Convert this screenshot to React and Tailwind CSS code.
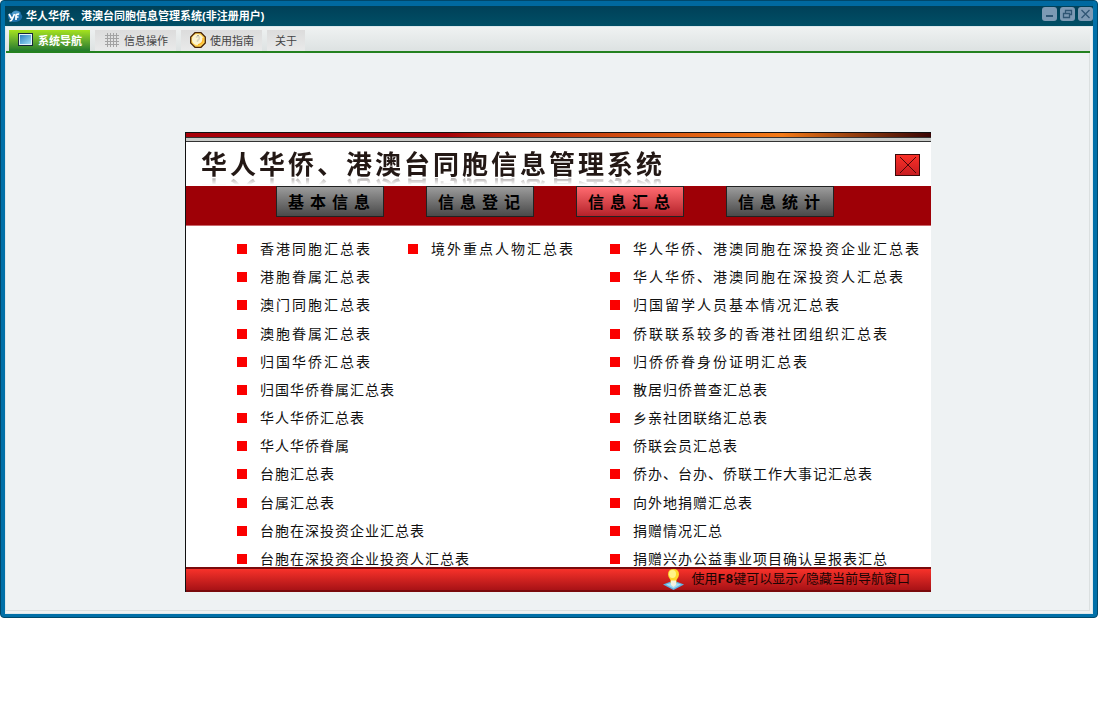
import clsx from 'clsx'

const menuItems = [
  { label: '系统导航', icon: 'screen' },
  { label: '信息操作', icon: 'grid' },
  { label: '使用指南', icon: 'guide' },
  { label: '关于' },
]

const sections = ['基本信息', '信息登记', '信息汇总', '信息统计']

const reportColumns = [
  [
    '香港同胞汇总表',
    '港胞眷属汇总表',
    '澳门同胞汇总表',
    '澳胞眷属汇总表',
    '归国华侨汇总表',
    '归国华侨眷属汇总表',
    '华人华侨汇总表',
    '华人华侨眷属',
    '台胞汇总表',
    '台属汇总表',
    '台胞在深投资企业汇总表',
    '台胞在深投资企业投资人汇总表',
  ],
  ['境外重点人物汇总表'],
  [
    '华人华侨、港澳同胞在深投资企业汇总表',
    '华人华侨、港澳同胞在深投资人汇总表',
    '归国留学人员基本情况汇总表',
    '侨联联系较多的香港社团组织汇总表',
    '归侨侨眷身份证明汇总表',
    '散居归侨普查汇总表',
    '乡亲社团联络汇总表',
    '侨联会员汇总表',
    '侨办、台办、侨联工作大事记汇总表',
    '向外地捐赠汇总表',
    '捐赠情况汇总',
    '捐赠兴办公益事业项目确认呈报表汇总',
  ],
]

function AppLogo() {
  return (
    <svg width="16" height="14" viewBox="0 0 16 14" aria-hidden="true">
      <path d="M1 8q-1-4 4-4 3-4 6-2 3 0 3 3 2 2 1 4-2 4-8 4-5 0-6-5z" fill="#1c6fa8" />
      <ellipse cx="9" cy="4.500" rx="4" ry="2.500" fill="#4f9bcb" />
      <path d="M2 5l2.500 4.500M7.500 5L5 10.500Q4.500 12 2.500 12M9 11V6.500Q9 5 12 5M8.500 8h3" fill="none" stroke="#fff" strokeWidth="1.700" />
    </svg>
  )
}

function MenuIcon({ name }) {
  if (name === 'screen') {
    return (
      <svg width="16" height="14" viewBox="0 0 16 14" shapeRendering="crispEdges" aria-hidden="true">
        <defs>
          <linearGradient id="screen" x1="0" y1="0" x2="1" y2="1">
            <stop offset="0" stopColor="#2b80bf" />
            <stop offset="1" stopColor="#9fe0f7" />
          </linearGradient>
        </defs>
        <rect x=".5" y=".5" width="14" height="12" fill="#e6f2f7" stroke="#14273c" />
        <rect x="2" y="2" width="11" height="9" fill="url(#screen)" />
      </svg>
    )
  }
  if (name === 'grid') {
    return (
      <svg width="14" height="14" viewBox="0 0 14 14" shapeRendering="crispEdges" aria-hidden="true">
        <path
          d="M2.500 0v14M5.500 0v14M8.500 0v14M11.500 0v14M0 2.500h14M0 5.500h14M0 8.500h14M0 11.500h14"
          stroke="#a3a3a3"
        />
      </svg>
    )
  }
  return (
    <svg width="16" height="16" viewBox="0 0 16 16" aria-hidden="true">
      <path d="M5 .7h6L15.300 5v6L11 15.300H5L.7 11V5z" fill="#ffd452" stroke="#4a2508" strokeWidth="1.300" />
      <circle cx="7.500" cy="7.500" r="5.500" fill="#fbf3d2" />
      <path d="M6 5.500q2-2 3.500 0 0 2-2 3V10" fill="none" stroke="#d9d4bd" strokeWidth="1.500" />
      <circle cx="8" cy="3.500" r=".6" fill="#555" />
      <path d="M13 6q1 5-5 7" fill="none" stroke="#ffb629" strokeWidth="1.500" />
    </svg>
  )
}

function WindowButton({ label, children }) {
  return (
    <button
      type="button"
      aria-label={label}
      className="flex h-[14px] w-[15px] items-center justify-center rounded-[3px] bg-[#7d9ab4]"
    >
      <svg width="11" height="10" viewBox="0 0 11 10" fill="none" stroke="#2f5674" strokeWidth="1.300" aria-hidden="true">
        {children}
      </svg>
    </button>
  )
}

function BulbIcon() {
  return (
    <svg width="21" height="21" viewBox="0 0 21 21" className="shrink-0" aria-hidden="true">
      <path d="M0 15.500l10.500-4 10.500 4L10.500 21z" fill="#5fb4e4" />
      <path d="M3 15.500l7.500-2.500 7.500 2.500-7.500 4z" fill="#a5dcf4" />
      <path d="M10.500 0Q16 0 16 5.500 16 8 13.500 11v3h-6v-3Q5 8 5 5.500 5 0 10.500 0z" fill="#ffd629" />
      <ellipse cx="9.500" cy="5" rx="3.500" ry="4" fill="#fff388" />
      <path d="M8 11.500h5V16l-2.500 2L8 16z" fill="#f4f2e0" />
    </svg>
  )
}

function TitleBar() {
  return (
    <header className="border-t-[5px] border-[#0069a0] bg-linear-to-b from-[#004058] to-[#004f66]">
      <div className="flex h-5 items-center pl-[2px]">
        <AppLogo />
        <h1 className="ml-[3px] flex-1 text-[11px] leading-4 font-bold text-white">
          华人华侨、港澳台同胞信息管理系统(非注册用户)
        </h1>
        <div className="flex gap-[3px] pb-1">
          <WindowButton label="最小化">
            <path d="M2 7h7" strokeWidth="2" />
          </WindowButton>
          <WindowButton label="还原">
            <path d="M3.500 4V1.500h6v4H8M1.500 4.500h6v4h-6z" />
          </WindowButton>
          <WindowButton label="关闭">
            <path d="M1.500 1l8 8M9.500 1l-8 8" />
          </WindowButton>
        </div>
      </div>
    </header>
  )
}

function MenuBar() {
  return (
    <nav className="mr-[2px] flex h-[26px] items-end gap-[5px] border-b-2 border-[#23811f] bg-linear-to-b from-[#eff2f2] to-[#dde2e2] pl-[3px]">
      {menuItems.map((item, i) => (
        <button
          key={item.label}
          type="button"
          className={clsx(
            'flex h-[21px] items-center gap-[3px] px-2 text-[11px] leading-4',
            i === 0
              ? 'bg-linear-to-b from-[#a5e31a] to-[#207a2c] font-bold text-white'
              : 'bg-linear-to-b from-[#dcdcdc] to-[#e9eaea] text-[#444]'
          )}
        >
          {item.icon && (
            <span className="flex w-[18px] justify-center pb-[2px]">
              <MenuIcon name={item.icon} />
            </span>
          )}
          {item.label}
        </button>
      ))}
    </nav>
  )
}

function SectionTabs() {
  return (
    <div className="flex h-10 items-start gap-[42px] border-b border-[#c9666a] bg-[#9e0006] pl-[90px]">
      {sections.map((name) => (
        <button
          key={name}
          type="button"
          className={clsx(
            'h-[31px] w-[108px] border border-[#222] pt-[2px] pl-1 text-[16px] leading-4 font-bold tracking-[6px] whitespace-nowrap text-black',
            name === '信息汇总'
              ? 'bg-linear-to-b from-[#ff6a70] to-[#b5202a]'
              : 'bg-linear-to-b from-[#9c9c9c] to-[#4a4a4a]'
          )}
        >
          {name}
        </button>
      ))}
    </div>
  )
}

function ReportList({ items }) {
  return (
    <ul className="flex flex-col justify-between">
      {items.map((name, i) => (
        <li key={name}>
          <a
            href="#"
            className={clsx(
              'flex items-center gap-[13px] text-[14px] leading-4 whitespace-nowrap text-[#111]',
              i < 5 ? 'tracking-[2px]' : 'tracking-[1px]'
            )}
          >
            <span className="size-[10px] shrink-0 bg-[#fb0000]"></span>
            {name}
          </a>
        </li>
      ))}
    </ul>
  )
}

function Navigator() {
  return (
    <section className="w-full max-w-[746px] border-t border-l border-[#111] bg-white">
      {/* Accent stripes */}
      <div className="h-1 bg-linear-to-r from-[#a80008] from-35% via-[#f47a16] via-80% to-[#3a0504]"></div>
      <div className="h-[5px] border-y border-[#333] bg-[#c9cbc8]"></div>

      {/* Heading */}
      <div className="flex h-[44px] items-center justify-between pt-[1px] pr-[11px] pl-[15px]">
        <h2 className="text-[26px] leading-[26px] font-bold tracking-[3px] whitespace-nowrap text-[#231815] [-webkit-box-reflect:below_-1px_linear-gradient(transparent_70%,rgba(0,0,0,0.4))]">
          华人华侨、港澳台同胞信息管理系统
        </h2>
        <button
          type="button"
          aria-label="关闭导航"
          className="flex h-[22px] w-[25px] items-center justify-center border border-[#3a0a0a] bg-linear-to-b from-[#fa3028] to-[#c81c20]"
        >
          <svg width="18" height="16" viewBox="0 0 18 16" stroke="#4a0808" aria-hidden="true">
            <path d="M1 0l16 16M17 0L1 16" />
          </svg>
        </button>
      </div>

      <SectionTabs />

      {/* Reports */}
      <div className="grid h-[341px] grid-cols-[171px_202px_1fr] pt-[15px] pl-[51px]">
        {reportColumns.map((items) => (
          <ReportList key={items[0]} items={items} />
        ))}
      </div>

      {/* Hint */}
      <footer className="flex h-[25px] items-center justify-end gap-2 border-y-2 border-[#7a0a0c] bg-linear-to-b from-[#f8322a] to-[#a81216] pr-[21px] font-['Liberation_Mono','Noto_Sans_CJK_SC',monospace] text-[13px] leading-4 text-[#1c0404]">
        <BulbIcon />
        <p>
          使用<b>F8</b>键可以显示/隐藏当前导航窗口
        </p>
      </footer>
    </section>
  )
}

export default function App() {
  return (
    <div className="min-h-screen bg-white font-['Liberation_Sans','Noto_Sans_CJK_SC',sans-serif]">
      <div className="overflow-hidden rounded-[4px] border border-[#00486b] bg-[#0070a8] px-1 pb-[3px]">
        <TitleBar />
        <div className="border border-[#dce8ec] bg-[#eef2f3]">
          <MenuBar />
          <main className="mr-[2px] mb-[2px] border-r border-b border-[#dbe0e0] pt-[79px] pb-[18px] pl-[179px]">
            <Navigator />
          </main>
        </div>
      </div>
    </div>
  )
}
